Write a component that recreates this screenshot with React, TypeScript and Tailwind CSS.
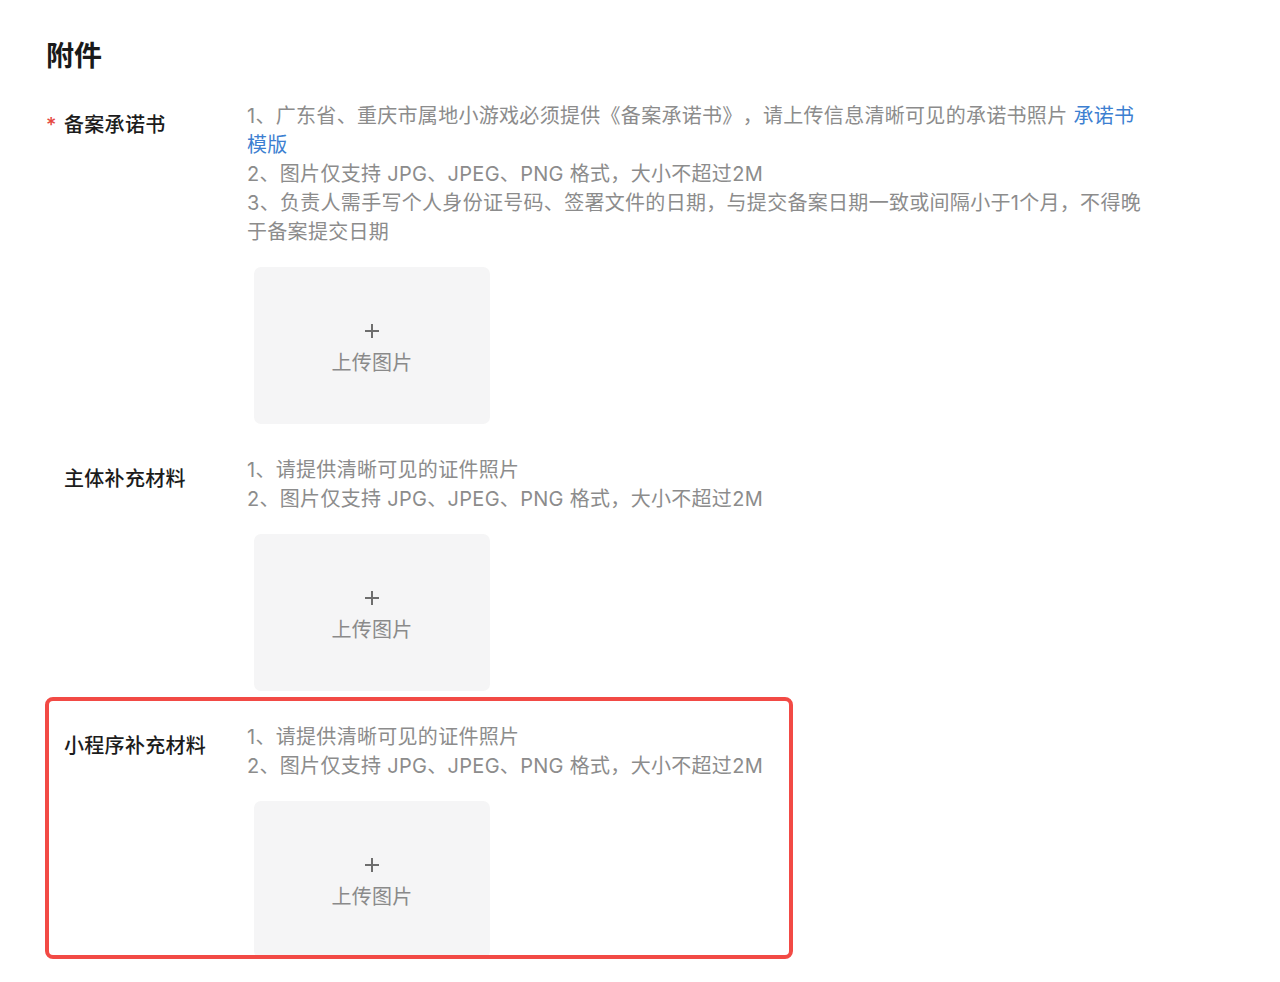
import React from "react";

const FONT = {
  fontFamily: 'Inter, "Noto Sans CJK SC", "Noto Sans", "Liberation Sans", sans-serif',
};

function Plus() {
  return (
    <svg width="16" height="16" viewBox="0 0 16 16" className="block">
      <rect x="7" y="1" width="2" height="14" fill="#6e6e6e" />
      <rect x="1" y="7" width="14" height="2" fill="#6e6e6e" />
    </svg>
  );
}

function UploadBox() {
  return (
    <div className="mt-[20px] ml-[7px] flex h-[157px] w-[236px] flex-col items-center justify-center rounded-[7px] bg-[#f5f5f6] pt-[10px]">
      <Plus />
      <div className="mt-[10px] text-[20px] leading-[29px] text-[#8a8a8a] tracking-[0.3px]">上传图片</div>
    </div>
  );
}

function Section({
  label,
  required,
  children,
}: {
  label: string;
  required?: boolean;
  children: React.ReactNode;
}) {
  return (
    <div className="flex">
      <div className="flex w-[201px] shrink-0 pt-[9px] text-[20px] leading-[29px] font-medium text-[#1c1c1c] tracking-[0.3px]">
        <span className="w-[18px] text-[#e5483f]">{required ? "*" : ""}</span>
        <span>{label}</span>
      </div>
      <div className="w-[910px]">
        <div className="text-[20px] leading-[29px] text-[#8c8c8c] tracking-[0.3px] [text-spacing-trim:space-all]">
          {children}
        </div>
        <UploadBox />
      </div>
    </div>
  );
}

export default function App() {
  return (
    <div className="min-h-screen bg-white" style={FONT}>
      <div className="pl-[46px] pt-[39px]">
        <h2 className="text-[28px] leading-[34px] font-bold text-[#1a1a1a]">附件</h2>
        <div className="mt-[29px] flex flex-col gap-[32px]">
          <Section label="备案承诺书" required>
            <div>
              1、广东省、重庆市属地小游戏必须提供《备案承诺书》，请上传信息清晰可见的承诺书照片{" "}
              <span className="text-[#3d7fd1]">
                承诺书
                <br />
                模版
              </span>
            </div>
            <div>2、图片仅支持 JPG、JPEG、PNG 格式，大小不超过2M</div>
            <div>3、负责人需手写个人身份证号码、签署文件的日期，与提交备案日期一致或间隔小于1个月，不得晚于备案提交日期</div>
          </Section>
          <Section label="主体补充材料">
            <div>1、请提供清晰可见的证件照片</div>
            <div>2、图片仅支持 JPG、JPEG、PNG 格式，大小不超过2M</div>
          </Section>
          <div className="relative">
            <Section label="小程序补充材料">
              <div>1、请提供清晰可见的证件照片</div>
              <div>2、图片仅支持 JPG、JPEG、PNG 格式，大小不超过2M</div>
            </Section>
            <div className="pointer-events-none absolute -top-[26px] -left-[1px] -bottom-[1px] w-[748px] rounded-[8px] border-[4px] border-[#f24a45]" />
          </div>
        </div>
      </div>
    </div>
  );
}
